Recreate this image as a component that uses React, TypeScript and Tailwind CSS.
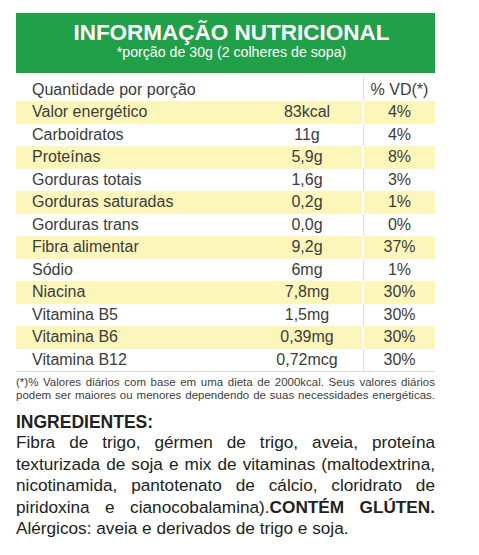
import React from "react";

const rows: [string, string, string][] = [
  ["Valor energético", "83kcal", "4%"],
  ["Carboidratos", "11g", "4%"],
  ["Proteínas", "5,9g", "8%"],
  ["Gorduras totais", "1,6g", "3%"],
  ["Gorduras saturadas", "0,2g", "1%"],
  ["Gorduras trans", "0,0g", "0%"],
  ["Fibra alimentar", "9,2g", "37%"],
  ["Sódio", "6mg", "1%"],
  ["Niacina", "7,8mg", "30%"],
  ["Vitamina B5", "1,5mg", "30%"],
  ["Vitamina B6", "0,39mg", "30%"],
  ["Vitamina B12", "0,72mcg", "30%"],
];

export default function App() {
  return (
    <div
      className="w-[479px] h-[555px] bg-white text-[#3c3c3c] overflow-hidden"
      style={{ fontFamily: '"Liberation Sans", Arial, sans-serif' }}
    >
      <div className="ml-4 w-[419px] pt-[13px]">
        {/* Banner */}
        <div className="h-[60px] bg-[#21a04a] flex flex-col items-center pl-3 pt-[8px] text-white">
          <div className="text-[22.5px] leading-[24px] font-bold">
            INFORMAÇÃO NUTRICIONAL
          </div>
          <div className="text-[14.2px] leading-[16px] -mt-[1px]">
            *porção de 30g (2 colheres de sopa)
          </div>
        </div>

        {/* Table */}
        <div className="mt-[4px] text-[16px]">
          <div className="flex h-[24px] items-center">
            <div className="w-[346px] pl-4 leading-[24px] pt-[2px]">Quantidade por porção</div>
            <div className="w-[2px] h-full flex"><div className="w-px bg-[#dedede] ml-[0.5px]" /></div>
            <div className="flex-1 text-center leading-[24px] pt-[2px]">% VD(*)</div>
          </div>
          {rows.map(([label, value, vd], i) => {
            const yellow = i % 2 === 0;
            return (
              <div key={label} className="flex h-[22.5px] leading-[22.5px]">
                <div className={`flex w-[346px] ${yellow ? "bg-[#fcf6bb]" : ""}`}>
                  <div className="w-[236px] pl-4">{label}</div>
                  <div className="w-[110px] text-center">{value}</div>
                </div>
                <div className="w-[2px] flex">
                  {!yellow && <div className="w-px bg-[#dedede] ml-[0.5px]" />}
                </div>
                <div className={`flex-1 text-center ${yellow ? "bg-[#fcf6bb]" : ""}`}>{vd}</div>
              </div>
            );
          })}
          <div className="h-px bg-[#dcdcdc]" />
        </div>

        {/* Footnote */}
        <div className="mt-[4px] text-[11.5px] leading-[12.5px] text-[#404040] whitespace-nowrap">
          <div className="text-justify [text-align-last:justify]">
            (*)% Valores diários com base em uma dieta de 2000kcal. Seus valores diários
          </div>
          <div className="text-justify [text-align-last:justify]">
            podem ser maiores ou menores dependendo de suas necessidades energéticas.
          </div>
        </div>

        {/* Ingredients */}
        <div className="mt-[11px] text-[#222]">
          <div className="text-[17.5px] leading-[20px] font-bold">INGREDIENTES:</div>
          <div className="text-[17.2px] leading-[21.5px] whitespace-nowrap">
            <div className="text-justify [text-align-last:justify]">
              Fibra de trigo, gérmen de trigo, aveia, proteína
            </div>
            <div className="text-justify [text-align-last:justify]">
              texturizada de soja e mix de vitaminas (maltodextrina,
            </div>
            <div className="text-justify [text-align-last:justify]">
              nicotinamida, pantotenato de cálcio, cloridrato de
            </div>
            <div className="text-justify [text-align-last:justify]">
              piridoxina e cianocobalamina).<span className="font-bold">CONTÉM GLÚTEN.</span>
            </div>
            <div>Alérgicos: aveia e derivados de trigo e soja.</div>
          </div>
        </div>
      </div>
    </div>
  );
}
